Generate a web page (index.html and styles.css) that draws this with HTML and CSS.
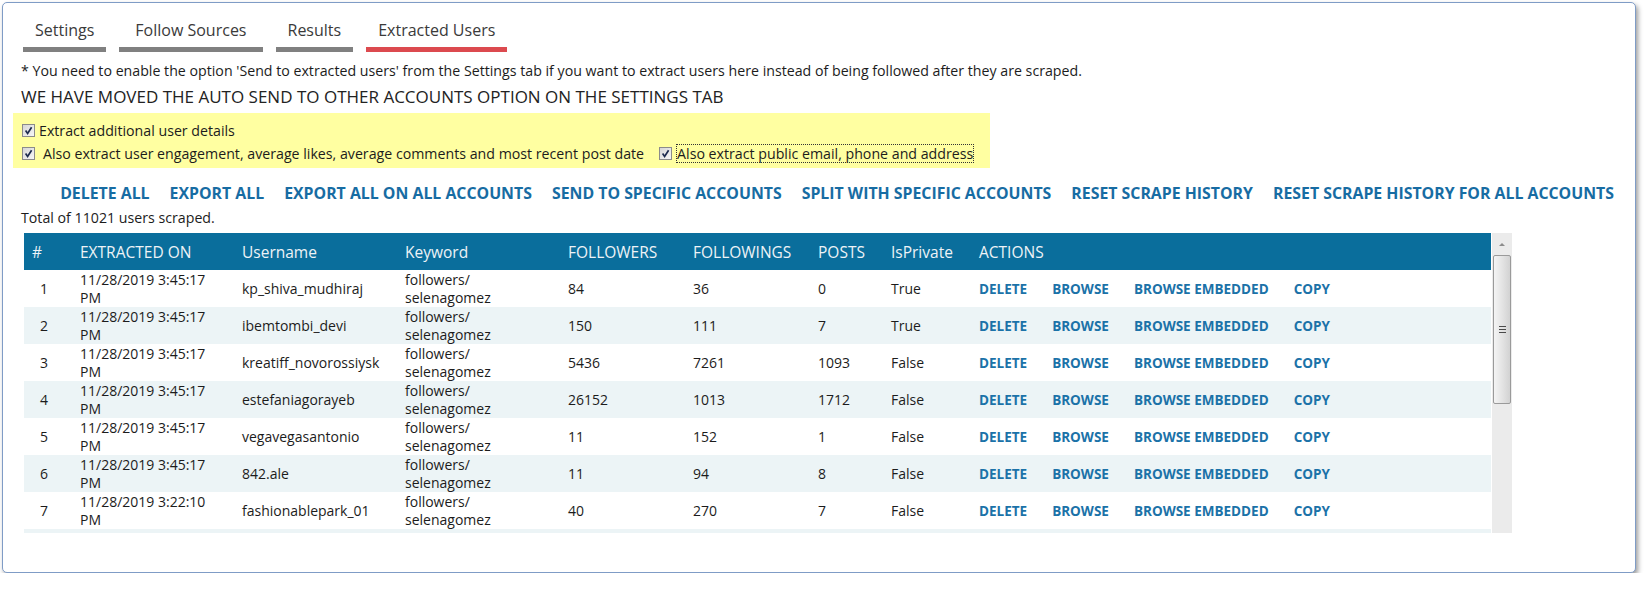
FILE: index.html
```html
<!DOCTYPE html>
<html>
<head>
<meta charset="utf-8">
<link rel="stylesheet" href="styles.css">
</head>
<body>
<div class="window">
  <div class="tabs">
    <div class="tab">Settings</div>
    <div class="tab wide">Follow Sources</div>
    <div class="tab">Results</div>
    <div class="tab active">Extracted Users</div>
  </div>
  <div class="note">* You need to enable the option 'Send to extracted users' from the Settings tab if you want to extract users here instead of being followed after they are scraped.</div>
  <div class="moved">WE HAVE MOVED THE AUTO SEND TO OTHER ACCOUNTS OPTION ON THE SETTINGS TAB</div>
  <div class="options">
    <div class="opt-row">
      <label class="opt"><span class="cb"><svg viewBox="0 0 13 13" width="13" height="13"><path d="M3.6 6.6 L5.6 9.4 L9.6 3.2" fill="none" stroke="#1d2b4e" stroke-width="1.7"/></svg></span>Extract additional user details</label>
    </div>
    <div class="opt-row">
      <label class="opt"><span class="cb"><svg viewBox="0 0 13 13" width="13" height="13"><path d="M3.6 6.6 L5.6 9.4 L9.6 3.2" fill="none" stroke="#1d2b4e" stroke-width="1.7"/></svg></span>Also extract user engagement, average likes, average comments and most recent post date</label>
      <label class="opt"><span class="cb"><svg viewBox="0 0 13 13" width="13" height="13"><path d="M3.6 6.6 L5.6 9.4 L9.6 3.2" fill="none" stroke="#1d2b4e" stroke-width="1.7"/></svg></span><span class="focus">Also extract public email, phone and address</span></label>
    </div>
  </div>
  <div class="actions">
    <a>DELETE ALL</a>
    <a>EXPORT ALL</a>
    <a>EXPORT ALL ON ALL ACCOUNTS</a>
    <a>SEND TO SPECIFIC ACCOUNTS</a>
    <a>SPLIT WITH SPECIFIC ACCOUNTS</a>
    <a>RESET SCRAPE HISTORY</a>
    <a>RESET SCRAPE HISTORY FOR ALL ACCOUNTS</a>
  </div>
  <div class="total">Total of 11021 users scraped.</div>
  <div class="grid-wrap">
    <div class="viewport">
      <table class="grid">
        <colgroup>
          <col class="c-num"><col class="c-date"><col class="c-user"><col class="c-kw"><col class="c-fol"><col class="c-fol"><col class="c-posts"><col class="c-priv"><col>
        </colgroup>
        <thead>
          <tr><th>#</th><th>EXTRACTED ON</th><th>Username</th><th>Keyword</th><th>FOLLOWERS</th><th>FOLLOWINGS</th><th>POSTS</th><th>IsPrivate</th><th>ACTIONS</th></tr>
        </thead>
        <tbody>
          <tr><td class="num">1</td><td>11/28/2019 3:45:17<br>PM</td><td>kp_shiva_mudhiraj</td><td>followers/<br>selenagomez</td><td>84</td><td>36</td><td>0</td><td>True</td><td><div class="row-actions"><a>DELETE</a><a>BROWSE</a><a>BROWSE EMBEDDED</a><a>COPY</a></div></td></tr>
          <tr><td class="num">2</td><td>11/28/2019 3:45:17<br>PM</td><td>ibemtombi_devi</td><td>followers/<br>selenagomez</td><td>150</td><td>111</td><td>7</td><td>True</td><td><div class="row-actions"><a>DELETE</a><a>BROWSE</a><a>BROWSE EMBEDDED</a><a>COPY</a></div></td></tr>
          <tr><td class="num">3</td><td>11/28/2019 3:45:17<br>PM</td><td>kreatiff_novorossiysk</td><td>followers/<br>selenagomez</td><td>5436</td><td>7261</td><td>1093</td><td>False</td><td><div class="row-actions"><a>DELETE</a><a>BROWSE</a><a>BROWSE EMBEDDED</a><a>COPY</a></div></td></tr>
          <tr><td class="num">4</td><td>11/28/2019 3:45:17<br>PM</td><td>estefaniagorayeb</td><td>followers/<br>selenagomez</td><td>26152</td><td>1013</td><td>1712</td><td>False</td><td><div class="row-actions"><a>DELETE</a><a>BROWSE</a><a>BROWSE EMBEDDED</a><a>COPY</a></div></td></tr>
          <tr><td class="num">5</td><td>11/28/2019 3:45:17<br>PM</td><td>vegavegasantonio</td><td>followers/<br>selenagomez</td><td>11</td><td>152</td><td>1</td><td>False</td><td><div class="row-actions"><a>DELETE</a><a>BROWSE</a><a>BROWSE EMBEDDED</a><a>COPY</a></div></td></tr>
          <tr><td class="num">6</td><td>11/28/2019 3:45:17<br>PM</td><td>842.ale</td><td>followers/<br>selenagomez</td><td>11</td><td>94</td><td>8</td><td>False</td><td><div class="row-actions"><a>DELETE</a><a>BROWSE</a><a>BROWSE EMBEDDED</a><a>COPY</a></div></td></tr>
          <tr><td class="num">7</td><td>11/28/2019 3:22:10<br>PM</td><td>fashionablepark_01</td><td>followers/<br>selenagomez</td><td>40</td><td>270</td><td>7</td><td>False</td><td><div class="row-actions"><a>DELETE</a><a>BROWSE</a><a>BROWSE EMBEDDED</a><a>COPY</a></div></td></tr>
          <tr><td class="num">8</td><td>11/28/2019 3:22:10<br>PM</td><td>fashion_lover_22</td><td>followers/<br>selenagomez</td><td>312</td><td>418</td><td>25</td><td>False</td><td><div class="row-actions"><a>DELETE</a><a>BROWSE</a><a>BROWSE EMBEDDED</a><a>COPY</a></div></td></tr>
        </tbody>
      </table>
    </div>
    <div class="scrollbar">
      <div class="sb-up"></div>
      <div class="sb-thumb"><span class="grip"></span></div>
    </div>
  </div>
</div>
</body>
</html>
```
FILE: styles.css
```css
html, body {
  margin: 0;
  padding: 0;
  background: #ffffff;
}
body {
  font-family: "Open Sans", "Noto Sans", sans-serif;
  color: #1c1c1c;
  padding: 2px 0 0 2px;
}
.window {
  width: 1634px;
  height: 571px;
  border: 1px solid #7f9cc6;
  border-radius: 5px;
  box-shadow: 2px 3px 5px rgba(0, 0, 0, 0.4);
  background: #ffffff;
  padding: 16px 0 0 10px;
  box-sizing: border-box;
  overflow: hidden;
}
.tabs {
  display: flex;
  gap: 13px;
  padding-left: 10px;
}
.tab {
  font-size: 16px;
  line-height: 22px;
  color: #3a3a3a;
  padding: 0 12px 6px;
  border-bottom: 5px solid #808080;
}
.tab.wide {
  padding: 0 16px 6px;
}
.tab.active {
  border-bottom-color: #dc4a4f;
}
.note {
  font-size: 14.2px;
  line-height: 20px;
  margin-top: 9px;
  padding-left: 8px;
}
.moved {
  font-size: 17px;
  line-height: 22px;
  margin-top: 5px;
  padding-left: 8px;
  color: #222;
}
.options {
  width: 977px;
  background: #ffffa1;
  margin-top: 5px;
  padding: 6px 0 3px 8px;
  box-sizing: border-box;
}
.opt-row {
  display: flex;
  gap: 14px;
  height: 23px;
  align-items: center;
}
.opt {
  display: flex;
  align-items: center;
  font-size: 14.2px;
  line-height: 20px;
}
.cb {
  width: 13px;
  height: 13px;
  box-sizing: border-box;
  border: 1px solid #8b8b8b;
  background: linear-gradient(135deg, #d6d6d6, #f6f6f6);
  margin: 0 8px 0 1px;
  display: flex;
  align-items: center;
  justify-content: center;
}
.cb svg {
  display: block;
  flex: none;
}
.opt:last-child .cb {
  margin-right: 4px;
}
.focus {
  outline: 1px dotted #333;
  outline-offset: -1px;
  padding: 0 1px;
  line-height: 19px;
}
.actions {
  display: flex;
  justify-content: flex-end;
  gap: 20px;
  margin-top: 14px;
  padding-right: 21px;
}
.actions a {
  font-size: 15.85px;
  line-height: 22px;
  font-weight: 700;
  color: #176ca3;
}
.total {
  font-size: 14.2px;
  line-height: 20px;
  margin-top: 4px;
  padding-left: 8px;
}
.grid-wrap {
  display: flex;
  margin-top: 5px;
  margin-left: 11px;
  height: 300px;
}
.viewport {
  width: 1467px;
  height: 300px;
  overflow: hidden;
}
.grid {
  width: 1467px;
  border-collapse: collapse;
  table-layout: fixed;
}
.c-num { width: 48px; }
.c-date { width: 162px; }
.c-user { width: 163px; }
.c-kw { width: 163px; }
.c-fol { width: 125px; }
.c-posts { width: 73px; }
.c-priv { width: 88px; }
.grid th {
  background: #0a6e9c;
  color: #eef3f7;
  font-weight: 400;
  font-size: 15.5px;
  text-align: left;
  height: 37px;
  padding: 0 0 0 8px;
  white-space: nowrap;
}
.grid td {
  height: 37px;
  padding: 0 0 0 8px;
  font-size: 14px;
  line-height: 18px;
  vertical-align: middle;
  white-space: nowrap;
  overflow: hidden;
}
.grid td.num {
  padding-left: 16px;
}
.grid tbody tr:nth-child(even) td {
  background: #ecf4f6;
}
.row-actions {
  display: flex;
  gap: 25px;
}
.row-actions a {
  font-size: 13.5px;
  font-weight: 700;
  color: #1b72a8;
}
.scrollbar {
  width: 20px;
  height: 300px;
  margin-left: 1px;
  background: #ebebeb;
  box-sizing: border-box;
  padding: 0 1px;
}
.sb-up {
  height: 22px;
  display: flex;
  align-items: center;
  justify-content: center;
}
.sb-up::before {
  content: "";
  border-left: 3px solid transparent;
  border-right: 3px solid transparent;
  border-bottom: 3px solid #8c8c8c;
}
.sb-thumb {
  height: 149px;
  box-sizing: border-box;
  border: 1px solid #9a9a9a;
  border-radius: 2px;
  background: linear-gradient(90deg, #f4f4f4, #e4e4e4 50%, #d2d2d2);
  display: flex;
  align-items: center;
  justify-content: center;
}
.grip {
  width: 7px;
  height: 7px;
  background: repeating-linear-gradient(180deg, #4a4a4a 0 1px, transparent 1px 3px);
}
```
